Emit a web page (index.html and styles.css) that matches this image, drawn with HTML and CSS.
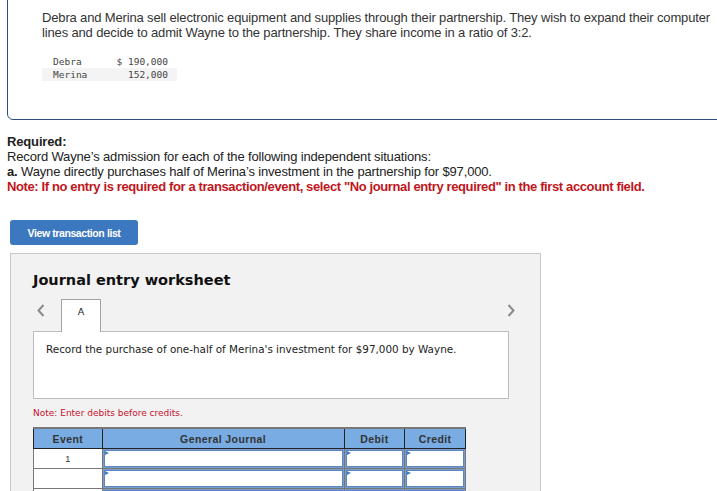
FILE: index.html
```html
<!DOCTYPE html>
<html lang="en">
<head>
<meta charset="UTF-8">
<meta name="viewport" content="width=device-width, initial-scale=1.0">
<title>Journal entry worksheet</title>
<link rel="stylesheet" href="styles.css">
</head>
<body>
<div class="intro">
  <p class="intro-text">Debra and Merina sell electronic equipment and supplies through their partnership. They wish to expand their computer lines and decide to admit Wayne to the partnership. They share income in a ratio of 3:2.</p>
  <table class="capital">
    <tr><td class="name">Debra</td><td class="amt">$ 190,000</td></tr>
    <tr class="alt"><td class="name">Merina</td><td class="amt">152,000</td></tr>
  </table>
</div>

<div class="required">
  <div class="req-title">Required:</div>
  <div>Record Wayne’s admission for each of the following independent situations:</div>
  <div><b>a.</b> Wayne directly purchases half of Merina’s investment in the partnership for $97,000.</div>
  <div class="req-note">Note: If no entry is required for a transaction/event, select "No journal entry required" in the first account field.</div>
</div>

<button class="btn-list">View transaction list</button>

<div class="worksheet">
  <h2 class="ws-title">Journal entry worksheet</h2>
  <div class="ws-nav">
    <span class="chev">
      <svg width="8" height="13" viewBox="0 0 8 13"><polyline points="6.5,1 1.5,6.5 6.5,12" fill="none" stroke="#8a8a8a" stroke-width="2"/></svg>
    </span>
    <div class="tab">A</div>
    <span class="chev chev-right">
      <svg width="8" height="13" viewBox="0 0 8 13"><polyline points="1.5,1 6.5,6.5 1.5,12" fill="none" stroke="#8a8a8a" stroke-width="2"/></svg>
    </span>
  </div>
  <div class="ws-box">Record the purchase of one-half of Merina's investment for $97,000 by Wayne.</div>
  <div class="ws-note">Note: Enter debits before credits.</div>

  <table class="journal">
    <thead>
      <tr>
        <th class="c-event">Event</th>
        <th class="c-gj">General Journal</th>
        <th class="c-num">Debit</th>
        <th class="c-num">Credit</th>
      </tr>
    </thead>
    <tbody>
      <tr>
        <td class="ev">1</td>
        <td class="inp"><div class="field"></div></td>
        <td class="inp"><div class="field"></div></td>
        <td class="inp"><div class="field"></div></td>
      </tr>
      <tr>
        <td class="ev"></td>
        <td class="inp"><div class="field"></div></td>
        <td class="inp"><div class="field"></div></td>
        <td class="inp"><div class="field"></div></td>
      </tr>
      <tr>
        <td class="ev"></td>
        <td class="inp"><div class="field"></div></td>
        <td class="inp"><div class="field"></div></td>
        <td class="inp"><div class="field"></div></td>
      </tr>
    </tbody>
  </table>
</div>
</body>
</html>
```

FILE: styles.css
```css
html {
  overflow: hidden;
}
body {
  margin: 0;
  font-family: "Liberation Sans", Arial, sans-serif;
  font-size: 13px;
  color: #222;
  background: #fff;
}

/* 問題文パネル */
.intro {
  width: 740px;
  margin: -10px 0 0 7px;
  padding: 19px 0 38px 34px;
  border: 1px solid #2a4f80;
  border-radius: 6px;
  box-sizing: border-box;
}
.intro-text {
  margin: 0;
  width: 672px;
  line-height: 15px;
  color: #333;
  letter-spacing: -0.15px;
}
.capital {
  margin-top: 15px;
  border-collapse: collapse;
  font-family: "DejaVu Sans Mono", monospace;
  font-size: 9.5px;
  color: #444;
}
.capital td {
  height: 13px;
  padding: 0;
}
.capital .name {
  width: 60px;
  padding-left: 11px;
}
.capital .amt {
  width: 55px;
  padding-right: 9px;
  text-align: right;
}
.capital .alt {
  background: #f4f4f4;
}

/* 設問 */
.required {
  margin: 14px 0 0 7px;
  line-height: 15px;
  letter-spacing: -0.15px;
}
.req-title {
  font-weight: bold;
}
.req-note {
  color: #c0161c;
  font-weight: bold;
  letter-spacing: -0.38px;
}

.btn-list {
  display: block;
  margin: 26px 0 0 10px;
  width: 128px;
  height: 25px;
  padding: 0;
  border: none;
  border-radius: 3px;
  background: #3b78bf;
  color: #fff;
  font-family: "Liberation Sans", Arial, sans-serif;
  font-size: 10.5px;
  font-weight: bold;
  letter-spacing: -0.4px;
}

/* ワークシート */
.worksheet {
  width: 531px;
  margin: 8px 0 0 10px;
  padding: 17px 25px 20px 22px;
  border: 1px solid #c8c8c8;
  background: #f2f2f2;
  box-sizing: border-box;
}
.ws-title {
  margin: 0;
  font-family: "DejaVu Sans", Verdana, sans-serif;
  font-size: 14.5px;
  line-height: 18px;
  color: #111;
}
.ws-nav {
  display: flex;
  align-items: flex-start;
  margin-top: 10px;
}
.chev {
  display: flex;
  padding: 5px 0 0 4px;
  width: 24px;
}
.chev-right {
  margin-left: auto;
  width: auto;
  padding-left: 0;
}
.tab {
  position: relative;
  z-index: 1;
  width: 40px;
  height: 33px;
  margin-bottom: -1px;
  border: 1px solid #a3a3a3;
  border-bottom: none;
  background: #fff;
  box-sizing: border-box;
  padding-top: 6px;
  text-align: center;
  font-family: "DejaVu Sans", Verdana, sans-serif;
  font-size: 9.5px;
  color: #222;
}
.ws-box {
  width: 476px;
  height: 68px;
  padding: 11px 0 0 12px;
  border: 1px solid #bdbdbd;
  background: #fff;
  box-sizing: border-box;
  font-family: "DejaVu Sans", Verdana, sans-serif;
  font-size: 10.4px;
  line-height: 12px;
  color: #222;
}
.ws-note {
  margin-top: 8px;
  font-family: "DejaVu Sans", Verdana, sans-serif;
  font-size: 9px;
  line-height: 12px;
  color: #c8102e;
}

/* 仕訳テーブル */
.journal {
  margin-top: 8px;
  width: 433px;
  border-collapse: collapse;
  font-family: "Liberation Sans", Arial, sans-serif;
}
.journal th {
  height: 19px;
  padding: 0;
  border: 1px solid #222;
  border-top: 2px solid #777;
  background: #78ace3;
  color: #333;
  font-size: 10.5px;
  letter-spacing: 0.4px;
}
.journal .c-event { width: 68px; }
.journal .c-gj { width: 243px; }
.journal .c-num { width: 60px; }
.journal td {
  height: 19px;
  padding: 0;
  border: 1px solid #777;
  background: #fff;
  box-sizing: border-box;
}
.journal .ev {
  text-align: center;
  font-size: 9px;
  color: #333;
}
.journal .inp {
  padding: 1px;
  background: #7a9cc9;
}
.field {
  position: relative;
  height: 15px;
  border: 1px solid #5a86c2;
  background: #fff;
}
.field::before {
  content: "";
  position: absolute;
  top: 0;
  left: 0;
  border-top: 2px solid transparent;
  border-bottom: 2px solid transparent;
  border-left: 4px solid #3f7cc5;
}
```
